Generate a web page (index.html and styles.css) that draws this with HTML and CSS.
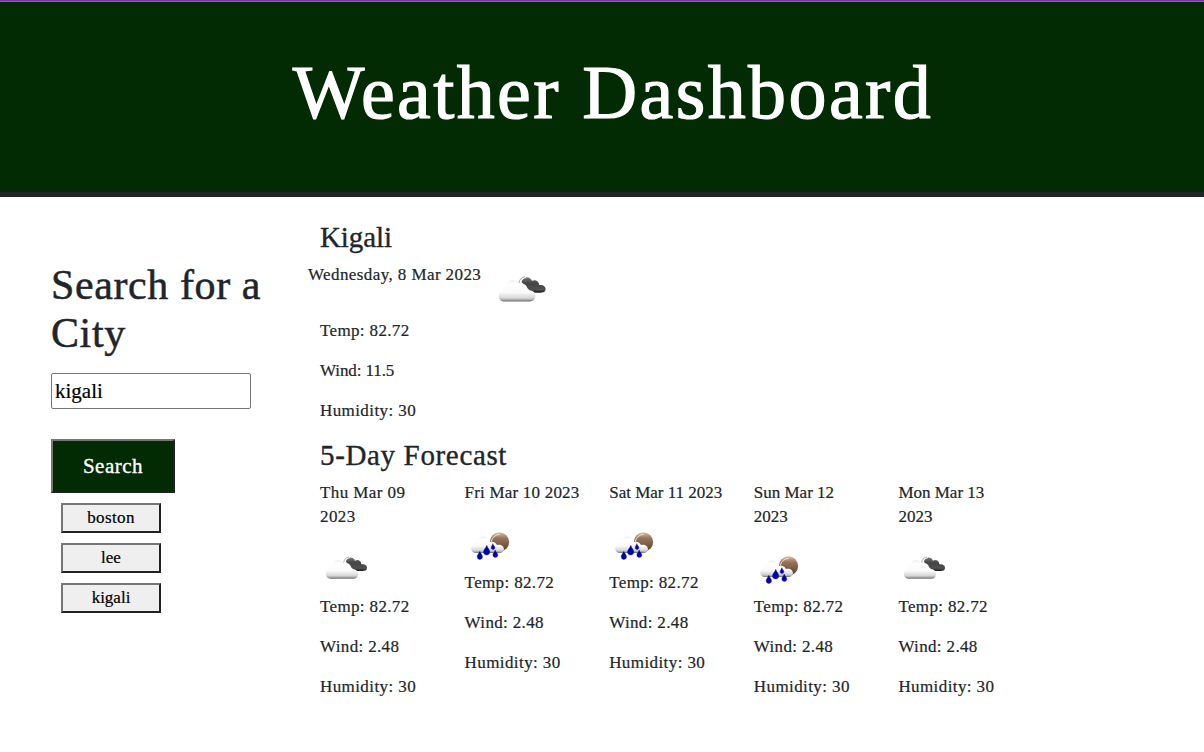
FILE: index.html
```html
<!DOCTYPE html>
<html lang="en">
<head>
<meta charset="utf-8">
<title>Weather Dashboard</title>
<link rel="stylesheet" href="styles.css">
</head>
<body>
<svg class="defs" aria-hidden="true">
  <defs>
    <linearGradient id="white" x1="0" y1="0" x2="0" y2="1"><stop offset="0" stop-color="#f0f0f0"/><stop offset=".2" stop-color="#fefefe"/><stop offset=".58" stop-color="#fafafa"/><stop offset=".83" stop-color="#d8d8d8"/><stop offset=".92" stop-color="#b0b0b0"/><stop offset="1" stop-color="#686868"/></linearGradient>
    <linearGradient id="dark" x1="0" y1="0" x2="0" y2="1"><stop offset="0" stop-color="#777"/><stop offset=".4" stop-color="#444"/><stop offset=".8" stop-color="#505050"/><stop offset="1" stop-color="#181818"/></linearGradient>
    <linearGradient id="brown" x1="0" y1="0" x2="0" y2="1"><stop offset="0" stop-color="#d8c0ae"/><stop offset=".3" stop-color="#98745a"/><stop offset="1" stop-color="#574230"/></linearGradient>
    <symbol id="cloudy" viewBox="15 0 150 150">
      <path fill="url(#dark)" d="M93 50C94 35 115 33 120 47C130 42 139 49 139 58C151 57 157 63 156 70C155 77 149 78 143 78H124C119 78 116 75 114 72L100 60Z"/>
      <path d="M87 57Q88 39 104 37" fill="none" stroke="#fff" stroke-width="5"/>
      <path d="M86 53Q88 38 102 36" fill="none" stroke="#888" stroke-width="2"/>
      <path fill="url(#white)" d="M46 101C30 101 28 79 43 72C42 61 47 55 54 55C57 44 76 39 84 54C97 50 110 59 109 73C123 70 131 79 129 89C128 97 123 101 115 101Z"/>
    </symbol>
    <symbol id="rain" viewBox="14.5 -12 150 150">
      <circle cx="118" cy="51" r="29" fill="url(#brown)"/>
      <path d="M93 50Q98 30 118 28" fill="none" stroke="#f1e5dd" stroke-width="3"/>
      <path fill="url(#white)" d="M48 84C31 84 28 63 41 57C41 44 49 39 56 40C65 28 87 33 90 52C98 48 108 53 110 60C123 56 133 65 131 74C130 81 124 84 115 84Z"/>
      <g fill="#0000b5" stroke="#000070" stroke-width="1">
        <path d="M80 61C77 70 70 74 70 81C70 93 89 93 89 81C89 74 82 70 80 61Z"/>
        <path d="M98 56C96 62 93 64 93 68C93 75 104 75 104 68C104 64 100 62 98 56Z"/>
        <path d="M59 79C57 86 51 89 51 95C51 106 67 106 67 95C67 89 61 86 59 79Z"/>
        <path d="M105 75C103 82 98 85 98 90C98 100 113 100 113 90C113 85 107 82 105 75Z"/>
      </g>
    </symbol>
  </defs>
</svg>
<header class="banner"><h1 class="title">Weather Dashboard</h1></header>
<main class="layout">
  <aside class="search">
    <h2 class="search-title">Search for a City</h2>
    <input class="city-input" type="text" value="kigali" aria-label="City">
    <button class="search-button">Search</button>
    <div class="history">
      <button class="history-item spaced">boston</button>
      <button class="history-item">lee</button>
      <button class="history-item">kigali</button>
    </div>
  </aside>
  <section class="weather">
    <h3 class="heading city">Kigali</h3>
    <div class="today"><p class="date wide">Wednesday, 8 Mar 2023</p><svg class="today-icon"><use href="#cloudy"/></svg></div>
    <p>Temp: 82.72</p>
    <p class="narrow">Wind: 11.5</p>
    <p class="wide">Humidity: 30</p>
    <h3 class="heading forecast-heading">5-Day Forecast</h3>
    <div class="forecast">
      <article class="day"><p class="wide">Thu Mar 09 2023</p><svg class="icon"><use href="#cloudy"/></svg><p>Temp: 82.72</p><p>Wind: 2.48</p><p class="wide">Humidity: 30</p></article>
      <article class="day"><p class="friday">Fri Mar 10 2023</p><svg class="icon"><use href="#rain"/></svg><p>Temp: 82.72</p><p>Wind: 2.48</p><p class="wide">Humidity: 30</p></article>
      <article class="day"><p class="plain">Sat Mar 11 2023</p><svg class="icon"><use href="#rain"/></svg><p>Temp: 82.72</p><p>Wind: 2.48</p><p class="wide">Humidity: 30</p></article>
      <article class="day"><p class="plain">Sun Mar 12<br>2023</p><svg class="icon"><use href="#rain"/></svg><p>Temp: 82.72</p><p>Wind: 2.48</p><p class="wide">Humidity: 30</p></article>
      <article class="day"><p class="plain">Mon Mar 13<br>2023</p><svg class="icon"><use href="#cloudy"/></svg><p>Temp: 82.72</p><p>Wind: 2.48</p><p class="wide">Humidity: 30</p></article>
    </div>
  </section>
</main>
</body>
</html>
```
FILE: styles.css
```css
* { box-sizing: border-box; }
body { margin: 0; background: #fff; color: #212529; font: 17px/24px "Liberation Serif", serif; letter-spacing: .35px; -webkit-text-stroke: .2px; }
h1, h2, h3, p { margin: 0; font-weight: 400; }
.defs { position: absolute; width: 0; height: 0; }
.banner { height: 197px; padding: 48px 0 0 22px; background: #022b03; border-top: 1px solid #7438a8; border-bottom: 5px solid #212529; box-shadow: inset 0 1px #8a62ad; text-align: center; color: #fff; }
.title { font-size: 76px; line-height: 86px; letter-spacing: 2.4px; -webkit-text-stroke: 1.2px; }
.layout { display: flex; }
.search { width: 269px; padding: 64px 0 0 51px; }
.search-title { font-size: 42px; line-height: 48px; letter-spacing: .6px; margin-bottom: 16px; -webkit-text-stroke: .5px; }
.city-input { display: block; width: 200px; height: 36px; padding: 1px 3px; border: 1px solid #767676; border-radius: 2px; font: 21px "Liberation Serif", serif; color: #000; margin-bottom: 30px; }
.search-button { display: block; width: 124px; height: 54px; padding: 0; background: #022b03; color: #fff; border: 2px solid; border-color: #767676 #212121 #212121 #767676; font: 21px "Liberation Serif", serif; letter-spacing: .5px; -webkit-text-stroke: .35px; }
.history { display: flex; flex-direction: column; gap: 10px; padding: 10px; }
.history-item { width: 100px; height: 30px; padding: 0; background: #efefef; color: #000; border: 2px solid; border-color: #767676 #212121 #212121 #767676; font: 17px "Liberation Serif", serif; }
.spaced { letter-spacing: .4px; }
.weather { padding: 23px 0 0 51px; }
.weather p { margin-bottom: 16px; }
.heading { font-size: 29px; line-height: 34px; margin-bottom: 9px; -webkit-text-stroke: .35px; }
.city { letter-spacing: -.1px; }
.forecast-heading { letter-spacing: .65px; margin: -1px 0 9px; }
.today { display: flex; height: 56px; margin-left: -12px; gap: 11px; }
.today-icon { width: 57px; height: 57px; }
.forecast { display: grid; grid-template-columns: repeat(5, 120.5px); column-gap: 24.1px; }
.icon { display: block; width: 50px; height: 50px; }
.wide { letter-spacing: .41px; }
.friday { letter-spacing: .2px; }
.narrow { letter-spacing: -.1px; }
.plain { letter-spacing: 0; }
```
